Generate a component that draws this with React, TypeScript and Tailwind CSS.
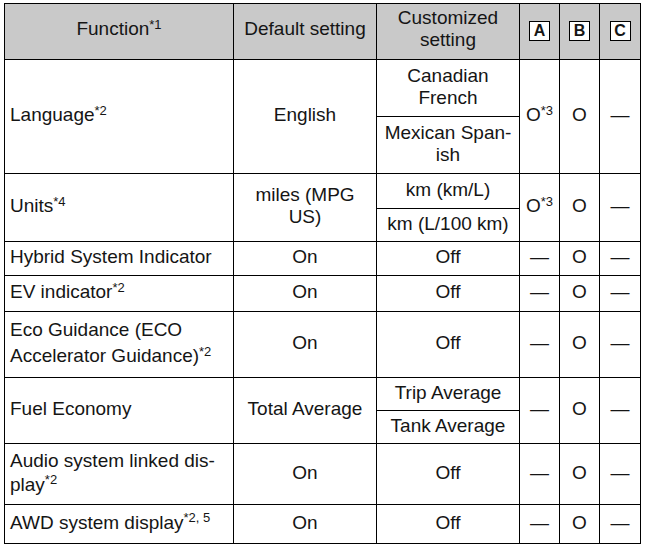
import React from "react";

const Sup = ({ children }: { children: React.ReactNode }) => (
  <sup className="text-[13px] leading-none">{children}</sup>
);

const Dash = () => <span>—</span>;

const Box = ({ l }: { l: string }) => (
  <span className="inline-flex w-[21px] h-[20px] items-center justify-center border border-black bg-white font-bold text-[16px] leading-none">
    {l}
  </span>
);

const td = "border border-black align-middle text-center px-1 pt-0 pb-[3px] leading-[22px]";
const tdL = "border border-black align-middle text-left pl-[5px] pr-1 pt-0 pb-[3px] leading-[22px]";
const th = "border border-black align-middle text-center px-1 pt-0 pb-[5px] leading-[22px]";

export default function App() {
  return (
    <div className="w-[648px] h-[551px] bg-white pt-[3px] pl-[4px]" style={{ fontFamily: '"Liberation Sans", Arial, sans-serif' }}>
      <table className="table-fixed border-collapse text-[19px] text-[#151515]" style={{ width: 636 }}>
        <colgroup>
          <col style={{ width: 229 }} />
          <col style={{ width: 143 }} />
          <col style={{ width: 143 }} />
          <col style={{ width: 40 }} />
          <col style={{ width: 40 }} />
          <col style={{ width: 41 }} />
        </colgroup>
        <tbody>
          <tr className="bg-[#c9c9c9]">
            <td className={th + " h-[56px]"}>Function<Sup>*1</Sup></td>
            <td className={th}>Default setting</td>
            <td className={th}>Customized setting</td>
            <td className={td}><Box l="A" /></td>
            <td className={td}><Box l="B" /></td>
            <td className={td}><Box l="C" /></td>
          </tr>
          <tr>
            <td rowSpan={2} className={tdL}>Language<Sup>*2</Sup></td>
            <td rowSpan={2} className={td}>English</td>
            <td className={td + " h-[57px]"}>Canadian<br />French</td>
            <td rowSpan={2} className={td + " px-0"}>O<Sup>*3</Sup></td>
            <td rowSpan={2} className={td}>O</td>
            <td rowSpan={2} className={td}><Dash /></td>
          </tr>
          <tr>
            <td className={td + " h-[57px]"}>Mexican Span-<br />ish</td>
          </tr>
          <tr>
            <td rowSpan={2} className={tdL}>Units<Sup>*4</Sup></td>
            <td rowSpan={2} className={td}>miles (MPG<br />US)</td>
            <td className={td + " h-[35px]"}>km (km/L)</td>
            <td rowSpan={2} className={td + " px-0"}>O<Sup>*3</Sup></td>
            <td rowSpan={2} className={td}>O</td>
            <td rowSpan={2} className={td}><Dash /></td>
          </tr>
          <tr>
            <td className={td + " h-[33px] px-0"}>km (L/100 km)</td>
          </tr>
          <tr>
            <td className={tdL + " h-[34px]"}>Hybrid System Indicator</td>
            <td className={td}>On</td>
            <td className={td}>Off</td>
            <td className={td}><Dash /></td>
            <td className={td}>O</td>
            <td className={td}><Dash /></td>
          </tr>
          <tr>
            <td className={tdL + " h-[36px]"}>EV indicator<Sup>*2</Sup></td>
            <td className={td}>On</td>
            <td className={td}>Off</td>
            <td className={td}><Dash /></td>
            <td className={td}>O</td>
            <td className={td}><Dash /></td>
          </tr>
          <tr>
            <td className={tdL + " h-[66px] leading-[26px]"}>Eco Guidance (ECO<br />Accelerator Guidance)<Sup>*2</Sup></td>
            <td className={td}>On</td>
            <td className={td}>Off</td>
            <td className={td}><Dash /></td>
            <td className={td}>O</td>
            <td className={td}><Dash /></td>
          </tr>
          <tr>
            <td rowSpan={2} className={tdL}>Fuel Economy</td>
            <td rowSpan={2} className={td + " px-0"}>Total Average</td>
            <td className={td + " h-[33px]"}>Trip Average</td>
            <td rowSpan={2} className={td}><Dash /></td>
            <td rowSpan={2} className={td}>O</td>
            <td rowSpan={2} className={td}><Dash /></td>
          </tr>
          <tr>
            <td className={td + " h-[33px]"}>Tank Average</td>
          </tr>
          <tr>
            <td className={tdL + " h-[61px] leading-[24px]"}>Audio system linked dis-<br />play<Sup>*2</Sup></td>
            <td className={td}>On</td>
            <td className={td}>Off</td>
            <td className={td}><Dash /></td>
            <td className={td}>O</td>
            <td className={td}><Dash /></td>
          </tr>
          <tr>
            <td className={tdL + " h-[39px]"}>AWD system display<Sup>*2, 5</Sup></td>
            <td className={td}>On</td>
            <td className={td}>Off</td>
            <td className={td}><Dash /></td>
            <td className={td}>O</td>
            <td className={td}><Dash /></td>
          </tr>
        </tbody>
      </table>
    </div>
  );
}
